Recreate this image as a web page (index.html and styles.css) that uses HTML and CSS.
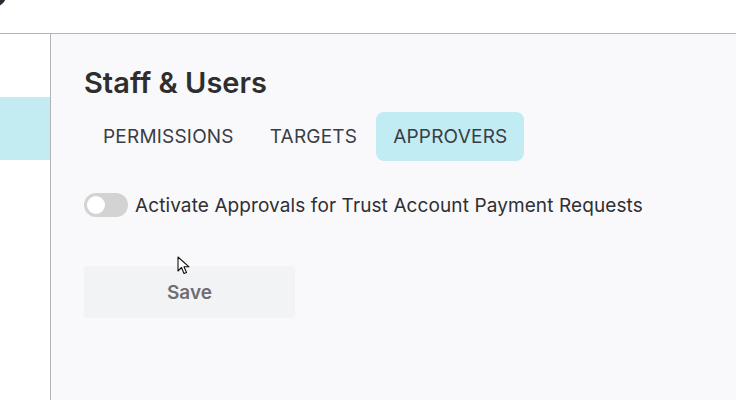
FILE: index.html
```html
<!DOCTYPE html>
<html lang="en">
<head>
    <meta charset="UTF-8">
    <meta name="viewport" content="width=device-width, initial-scale=1.0">
    <title>Staff &amp; Users</title>
    <link rel="stylesheet" href="styles.css">
</head>
<body>
    <header class="topbar">
        <span class="avatar"></span>
    </header>

    <div class="layout">
        <aside class="sidebar">
            <div class="side-item active"></div>
        </aside>

        <main class="content">
            <h1>Staff &amp; Users</h1>
            <nav class="tabs">
                <button class="tab">Permissions</button>
                <button class="tab">Targets</button>
                <button class="tab selected">Approvers</button>
            </nav>

            <label class="switch-row">
                <span class="switch"><span class="knob"></span></span>
                Activate Approvals for Trust Account Payment Requests
            </label>

            <button class="save">Save</button>

            <!-- mouse pointer captured in the screenshot -->
            <svg class="cursor" width="14" height="20" viewBox="0 0 14 20">
                <path d="M1 1 L1 15 L4.5 11.5 L7 17.5 L9.5 16.5 L7 10.8 L12 10.8 Z" fill="#fff" stroke="#111" stroke-width="1.1" stroke-linejoin="round"/>
            </svg>
        </main>
    </div>
</body>
</html>
```

FILE: styles.css
```css
body {
    font-family: Inter, "Noto Sans", sans-serif;
    margin: 0;
    padding: 0;
    background-color: #fff;
    color: #333;
    height: 100vh;
    display: flex;
    flex-direction: column;
    overflow: hidden;
}
.topbar {
    height: 33px;
    border-bottom: 1px solid #b4b4b4;
    position: relative;
    flex-shrink: 0;
}
.avatar {
    position: absolute;
    left: -14px;
    top: -14px;
    width: 20px;
    height: 20px;
    border-radius: 50%;
    background: #2a2a35;
}
.layout {
    display: flex;
    flex: 1;
}
.sidebar {
    width: 50px;
    border-right: 1px solid #b4b4b4;
    padding-top: 63px;
    background: #fff;
}
.side-item {
    height: 63px;
}
.side-item.active {
    background-color: #c2ebf2;
}
.content {
    flex: 1;
    background-color: #f9f9fb;
    padding: 31px 33px;
    position: relative;
}
h1 {
    font-size: 29px;
    font-weight: 600;
    margin: 0 0 11px;
    line-height: 36px;
    color: #2e2e2e;
}
.tabs {
    display: flex;
    gap: 2px;
    margin-left: 2px;
}
.tab {
    font-family: inherit;
    font-size: 19px;
    letter-spacing: 0.2px;
    text-transform: uppercase;
    color: #3a3d45;
    background: none;
    border: none;
    border-radius: 8px;
    padding: 0 17px;
    height: 49px;
    cursor: pointer;
}
.tab.selected {
    background-color: #c2ecf3;
}
.switch-row {
    display: flex;
    align-items: center;
    gap: 7px;
    margin-top: 32px;
    font-size: 19px;
    letter-spacing: 0.1px;
    color: #2f2f33;
}
.switch {
    width: 44px;
    height: 24px;
    border-radius: 12px;
    background-color: #d3d3d3;
    display: flex;
    align-items: center;
    padding: 0 3px;
    box-sizing: border-box;
}
.knob {
    width: 18px;
    height: 18px;
    border-radius: 50%;
    background: #fff;
}
.save {
    display: block;
    margin-top: 49px;
    width: 211px;
    height: 52px;
    border: none;
    border-radius: 4px;
    background-color: #f2f3f4;
    font-family: inherit;
    font-size: 19px;
    font-weight: 600;
    color: #6e6e72;
}
.cursor {
    position: absolute;
    left: 126px;
    top: 222px;
}
```
